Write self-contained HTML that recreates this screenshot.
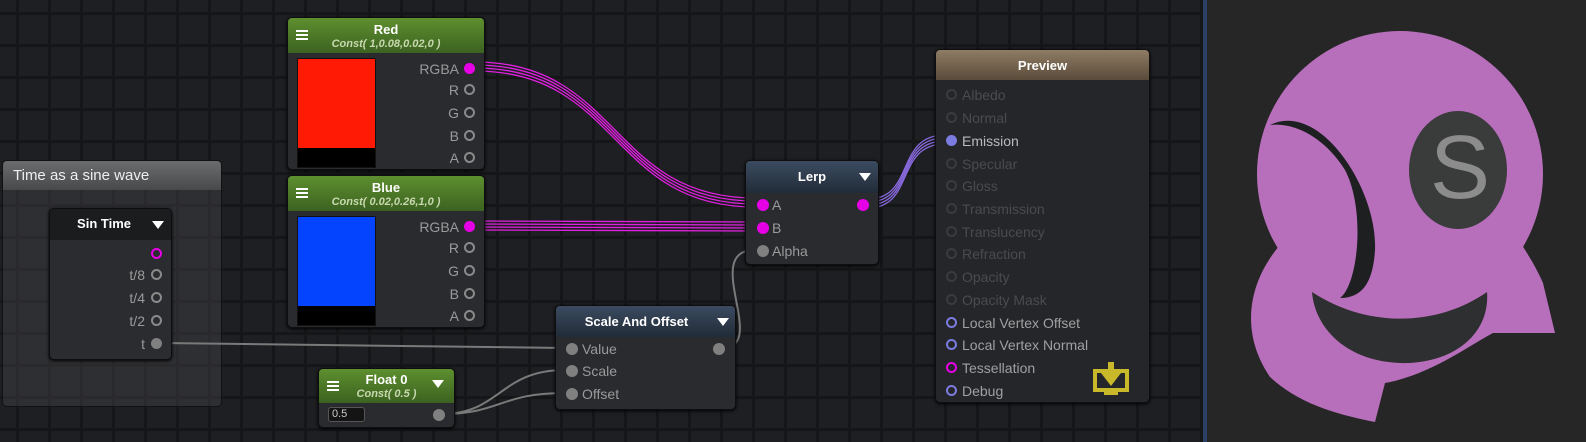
<!DOCTYPE html>
<html><head><meta charset="utf-8"><style>
*{margin:0;padding:0;box-sizing:border-box}
body{width:1586px;height:442px;overflow:hidden;position:relative;font-family:"Liberation Sans",sans-serif;
background-color:#1e1f22;
background-image:linear-gradient(90deg,#151618 3px,transparent 3px),linear-gradient(0deg,#151618 3px,transparent 3px);
background-size:32px 32px;background-position:16px 15px;}
.n{position:absolute;background:#2a2b2f;border:1px solid #0e0e10;border-radius:5px;box-shadow:0 1px 3px #000}
.h{position:absolute;left:0;right:0;top:0;border-radius:4px 4px 0 0;color:#fff;font-weight:bold;font-size:13px;text-align:center}
.g{background:linear-gradient(180deg,#5e8f2f,#3c6220)}
.b{background:linear-gradient(180deg,#3b4b60,#222c38)}
.sub{font-style:italic;font-size:11px;color:#c8d8b0;font-weight:bold;display:block;margin-top:1px}
.ham{position:absolute;left:8px;top:12px;width:12px;height:10px;border-top:2px solid #fff;border-bottom:2px solid #fff}
.ham:after{content:"";position:absolute;left:0;right:0;top:2px;height:2px;background:#fff}
.tri{position:absolute;width:0;height:0;border-left:6px solid transparent;border-right:6px solid transparent;border-top:8px solid #fff}
.l{position:absolute;font-size:14px;color:#9a9a9a;line-height:16px;white-space:nowrap}
.p{position:absolute;width:11px;height:11px;border-radius:50%}
.ro{border:2px solid #8a8a8a}
.f{background:#808080}
.m{background:#e600e6}
.mo{border:2px solid #e600e6}
.bo{border:2px solid #7b7be0}
.bf{background:#7b7be0}
.dk{border:2px solid #3a3b3e}
.pl{position:absolute;font-size:14px;color:#4a4b4e;line-height:16px;white-space:nowrap}
</style></head><body>
<div style="position:absolute;left:1203px;top:0;width:4px;height:442px;background:#2c4066"></div>
<div style="position:absolute;left:1207px;top:0;width:379px;height:442px;background:#262626"></div>

<!-- Time group -->
<div style="position:absolute;left:2px;top:160px;width:220px;height:247px;background:rgba(60,61,64,.55);border:1px solid #111;border-radius:5px"></div>
<div style="position:absolute;left:3px;top:161px;width:218px;height:29px;background:linear-gradient(180deg,#6b6c6e,#48494b);border-radius:4px 4px 0 0;color:#eee;font-size:15px;padding:6px 0 0 10px">Time as a sine wave</div>

<svg style="position:absolute;left:0;top:0" width="1586" height="442">
<g fill="none" stroke="#e020e0" stroke-width="1.3">
<path d="M475,62 C620,62 610,198 755,198"/><path d="M475,65 C620,65 610,201 755,201"/><path d="M475,68 C620,68 610,204 755,204"/><path d="M475,71 C620,71 610,207 755,207"/>
<path d="M475,221 L755,222"/><path d="M475,224 L755,225"/><path d="M475,227 L755,228"/><path d="M475,230 L755,231"/>
</g>
<g fill="none" stroke="#8a6ae0" stroke-width="1.3">
<path d="M868,199 C915,199 895,135 945,135"/><path d="M868,202 C915,202 895,138 945,138"/><path d="M868,205 C915,205 895,141 945,141"/><path d="M868,208 C915,208 895,144 945,144"/>
</g>
<g fill="none" stroke="#7a7a7a" stroke-width="2">
<path d="M162,343 L565,348"/>
<path d="M442,414 C500,414 500,370 565,370"/>
<path d="M442,414 C500,414 500,393 565,393"/>
<path d="M722,348 C770,348 700,250 755,250"/>
</g>
</svg>

<!-- Sin Time -->
<div class="n" style="left:49px;top:208px;width:123px;height:152px;background:#2b2c30">
<div class="h" style="height:31px;background:#1b1c1e;padding:7px 40px 0 0;text-align:right">Sin Time</div>
<div class="tri" style="left:102px;top:12px"></div>
<div class="p mo" style="left:101px;top:39px"></div>
<div class="l" style="right:26px;top:58px">t/8</div><div class="p ro" style="left:101px;top:60px"></div>
<div class="l" style="right:26px;top:81px">t/4</div><div class="p ro" style="left:101px;top:83px"></div>
<div class="l" style="right:26px;top:104px">t/2</div><div class="p ro" style="left:101px;top:106px"></div>
<div class="l" style="right:26px;top:127px">t</div><div class="p f" style="left:101px;top:129px"></div>
</div>

<!-- Red -->
<div class="n" style="left:287px;top:17px;width:198px;height:153px">
<div class="h g" style="height:35px;padding-top:4px">Red<span class="sub">Const( 1,0.08,0.02,0 )</span></div><div class="ham"></div>
<div style="position:absolute;left:9px;top:40px;width:79px;height:110px;background:#000;border:1px solid #111"><div style="height:89px;background:#ff1a05"></div></div>
<div class="l" style="right:25px;top:43px">RGBA</div><div class="p m" style="left:176px;top:45px"></div>
<div class="l" style="right:25px;top:64px">R</div><div class="p ro" style="left:176px;top:66px"></div>
<div class="l" style="right:25px;top:87px">G</div><div class="p ro" style="left:176px;top:89px"></div>
<div class="l" style="right:25px;top:110px">B</div><div class="p ro" style="left:176px;top:112px"></div>
<div class="l" style="right:25px;top:132px">A</div><div class="p ro" style="left:176px;top:134px"></div>
</div>

<!-- Blue -->
<div class="n" style="left:287px;top:175px;width:198px;height:153px">
<div class="h g" style="height:35px;padding-top:4px">Blue<span class="sub">Const( 0.02,0.26,1,0 )</span></div><div class="ham"></div>
<div style="position:absolute;left:9px;top:40px;width:79px;height:110px;background:#000;border:1px solid #111"><div style="height:89px;background:#0544ff"></div></div>
<div class="l" style="right:25px;top:43px">RGBA</div><div class="p m" style="left:176px;top:45px"></div>
<div class="l" style="right:25px;top:64px">R</div><div class="p ro" style="left:176px;top:66px"></div>
<div class="l" style="right:25px;top:87px">G</div><div class="p ro" style="left:176px;top:89px"></div>
<div class="l" style="right:25px;top:110px">B</div><div class="p ro" style="left:176px;top:112px"></div>
<div class="l" style="right:25px;top:132px">A</div><div class="p ro" style="left:176px;top:134px"></div>
</div>

<!-- Float 0 -->
<div class="n" style="left:318px;top:368px;width:137px;height:60px">
<div class="h g" style="height:34px;padding-top:3px;font-size:13px">Float 0<span class="sub">Const( 0.5 )</span></div><div class="ham"></div>
<div class="tri" style="left:113px;top:11px"></div>
<div style="position:absolute;left:9px;top:38px;width:37px;height:15px;background:#141414;border:1px solid #555;border-radius:3px;color:#ccc;font-size:11px;padding-left:3px;line-height:13px">0.5</div>
<div class="p f" style="left:114px;top:40px;width:12px;height:12px"></div>
</div>

<!-- Lerp -->
<div class="n" style="left:745px;top:160px;width:134px;height:105px">
<div class="h b" style="height:32px;padding-top:8px">Lerp</div>
<div class="tri" style="left:113px;top:12px"></div>
<div class="p m" style="left:11px;top:38px;width:12px;height:12px"></div><div class="l" style="left:26px;top:36px">A</div>
<div class="p m" style="left:11px;top:61px;width:12px;height:12px"></div><div class="l" style="left:26px;top:59px">B</div>
<div class="p f" style="left:11px;top:84px;width:12px;height:12px"></div><div class="l" style="left:26px;top:82px">Alpha</div>
<div class="p m" style="left:111px;top:38px;width:12px;height:12px"></div>
</div>

<!-- Scale and Offset -->
<div class="n" style="left:555px;top:305px;width:181px;height:105px">
<div class="h b" style="height:31px;padding:8px 18px 0 0">Scale And Offset</div>
<div class="tri" style="left:161px;top:12px"></div>
<div class="p f" style="left:10px;top:37px;width:12px;height:12px"></div><div class="l" style="left:26px;top:35px">Value</div>
<div class="p f" style="left:10px;top:59px;width:12px;height:12px"></div><div class="l" style="left:26px;top:57px">Scale</div>
<div class="p f" style="left:10px;top:82px;width:12px;height:12px"></div><div class="l" style="left:26px;top:80px">Offset</div>
<div class="p f" style="left:157px;top:37px;width:12px;height:12px"></div>
</div>

<!-- Preview -->
<div class="n" style="left:935px;top:49px;width:215px;height:354px;background:#25262a">
<div class="h" style="height:30px;padding-top:8px;background:linear-gradient(180deg,#8e7c64,#5a4b3a)">Preview</div>
<div class="p dk" style="left:10px;top:39px"></div><div class="pl" style="left:26px;top:37px">Albedo</div>
<div class="p dk" style="left:10px;top:62px"></div><div class="pl" style="left:26px;top:60px">Normal</div>
<div class="p bf" style="left:10px;top:85px"></div><div class="l" style="left:26px;top:83px;color:#bbb">Emission</div>
<div class="p dk" style="left:10px;top:108px"></div><div class="pl" style="left:26px;top:106px">Specular</div>
<div class="p dk" style="left:10px;top:130px"></div><div class="pl" style="left:26px;top:128px">Gloss</div>
<div class="p dk" style="left:10px;top:153px"></div><div class="pl" style="left:26px;top:151px">Transmission</div>
<div class="p dk" style="left:10px;top:176px"></div><div class="pl" style="left:26px;top:174px">Translucency</div>
<div class="p dk" style="left:10px;top:198px"></div><div class="pl" style="left:26px;top:196px">Refraction</div>
<div class="p dk" style="left:10px;top:221px"></div><div class="pl" style="left:26px;top:219px">Opacity</div>
<div class="p dk" style="left:10px;top:244px"></div><div class="pl" style="left:26px;top:242px">Opacity Mask</div>
<div class="p bo" style="left:10px;top:267px"></div><div class="l" style="left:26px;top:265px;color:#a0a0a0">Local Vertex Offset</div>
<div class="p bo" style="left:10px;top:289px"></div><div class="l" style="left:26px;top:287px;color:#a0a0a0">Local Vertex Normal</div>
<div class="p mo" style="left:10px;top:312px"></div><div class="l" style="left:26px;top:310px;color:#a0a0a0">Tessellation</div>
<div class="p bo" style="left:10px;top:335px"></div><div class="l" style="left:26px;top:333px;color:#a0a0a0">Debug</div>
<svg style="position:absolute;left:155px;top:310px" width="40" height="40" viewBox="0 0 40 40">
<rect x="4" y="11" width="32" height="19" fill="none" stroke="#c8b82a" stroke-width="4"/>
<rect x="13" y="31" width="14" height="4" fill="#c8b82a"/>
<rect x="17" y="2" width="6" height="12" fill="#c8b82a"/>
<polygon points="10,13 30,13 20,26" fill="#c8b82a"/>
</svg>
</div>

<!-- Logo -->
<svg style="position:absolute;left:0;top:0" width="1586" height="442">
<circle cx="1400" cy="174" r="143" fill="#b86fbb"/>
<path d="M1280,245 C1250,280 1238,330 1270,377 C1300,405 1340,415 1375,422 L1385,383 C1430,375 1470,345 1493,333 L1555,333 L1543,283 C1535,265 1528,255 1522,245 Z" fill="#b86fbb"/>
<path d="M1312,292 C1370,330 1440,325 1487,292 C1490,330 1460,360 1410,363 C1350,365 1315,330 1312,292 Z" fill="#2e2f30"/>
<path d="M1270,125 C1320,100 1378,190 1375,250 C1373,283 1362,298 1340,298 C1358,285 1366,210 1345,170 C1325,138 1295,122 1270,125 Z" fill="#1e1f21"/>
<ellipse cx="1458" cy="170" rx="49" ry="59" fill="#3a3b3b"/>
<text x="1460" y="198" text-anchor="middle" font-family="Liberation Sans,sans-serif" font-size="90" fill="#8c8c8c">S</text>
</svg>
</body></html>
